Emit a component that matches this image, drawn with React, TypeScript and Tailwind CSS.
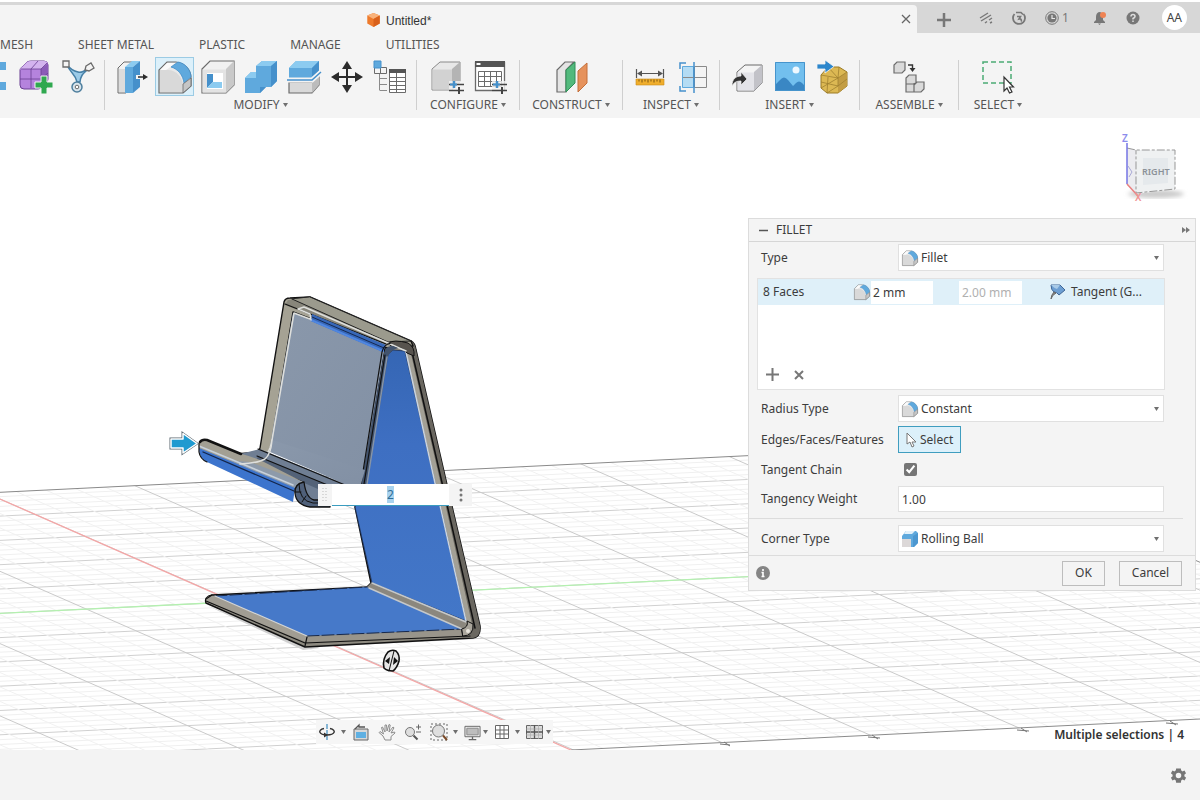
import type { ReactNode } from 'react';

const LINE = '#6b6b6b';
const BLUE = '#5fa9dd';
const BLUE_DARK = '#4590cb';
const BLUE_LIGHT = '#8ccbf0';

/* ---------- Toolbar icons (38 x 38 box) ---------- */

function Icon({ children }: { children: ReactNode }) {
  return (
    <svg viewBox="0 0 38 38" className="h-[38px] w-[38px]" fill="none" aria-hidden="true">
      {children}
    </svg>
  );
}

function EdgeIcon() {
  return (
    <Icon>
      <path d="M14 5h17v8H21v12h10v8H14z" fill={BLUE} />
    </Icon>
  );
}

function FormIcon() {
  return (
    <Icon>
      <path d="M3 13q0-2 2-3l5-5q2-1 4-1h13q4 0 4 4v14q0 2-2 4l-4 4q-2 2-4 2H7q-4 0-4-4z" fill="#b583dd" stroke="#6a3f93" />
      <path d="M3 13q0-2 2-3l5-5q2-1 4-1h13q3 0 4 2l-7 6H6q-3 0-3 1z" fill="#d3b3ee" />
      <path d="M24 12l7-6v16q0 2-2 4l-5 5z" fill="#8c5bb8" />
      <path d="M4 12h20l6-6M24 12v19M3 22h21l7-6M14 12v19M14 12l7-8" stroke="#6a3f93" strokeWidth=".8" />
      <path d="M24 19h6v6h6v6h-6v6h-6v-6h-6v-6h6z" fill="#2fa84f" stroke="#f4f4f4" />
    </Icon>
  );
}

function BranchIcon() {
  return (
    <Icon>
      <path d="M8 8c4 9 8 8 10 17h3c1-9 5-9 10-15-6 4-8 6-12 5-5-1-7-3-11-7z" fill="#9ccbe8" stroke="#467fa6" strokeWidth="1.5" />
      <path d="M4 4h6v6H4zM27 9l5-3 3 5-5 3-4-1z" fill="#f4f4f4" stroke={LINE} strokeWidth="1.3" />
      <circle cx="18" cy="30" r="5" fill="#d8e4ec" stroke="#4f7f9e" strokeWidth="1.5" />
      <circle cx="18" cy="30" r="1.8" fill="#fff" stroke={LINE} />
    </Icon>
  );
}

function PressPullIcon() {
  return (
    <Icon>
      <path d="M5 10l6-6h8l-6 6v25H5z" fill="#f2f2f2" stroke={LINE} />
      <path d="M6 11h6v23H6z" fill="#dcdcdc" />
      <path d="M12 9l7-6h8l-7 6z" fill={BLUE_LIGHT} />
      <path d="M12 9h8v26h-8z" fill={BLUE} />
      <path d="M20 9l7-6v26l-7 6z" fill={BLUE_DARK} />
      <path d="M23 19h8" stroke="#f4f4f4" strokeWidth="4" />
      <path d="M25 19h6" stroke="#2b2b2b" strokeWidth="1.5" />
      <path d="M30 16l5 3-5 3z" fill="#2b2b2b" />
    </Icon>
  );
}

function FilletShape() {
  return (
    <>
      <path d="M3 35V12l8-8h9c9 1 15 8 15 16v8l-8 7z" fill="#e9e9e9" stroke={LINE} strokeWidth="1.2" />
      <path d="M4 12h9c8 1 13 7 14 15v7H4z" fill="#d9d9d9" />
      <path d="M4 12l7-7h8l-6 5-3 2z" fill="#fafafa" />
      <path d="M15 9l7-5c7 1 13 8 13 15l-7 6C27 17 22 11 15 9z" fill={BLUE} stroke={BLUE_DARK} strokeWidth=".8" />
      <path d="M27 26l8-6v8l-8 7z" fill="#c6c6c6" stroke={LINE} strokeWidth=".8" />
    </>
  );
}

function FilletIcon() {
  return (
    <Icon>
      <FilletShape />
    </Icon>
  );
}

function ShellIcon() {
  return (
    <Icon>
      <path d="M3 35V11l8-8h24v24l-8 8z" fill="#f1f1f1" stroke={LINE} strokeWidth="1.2" />
      <path d="M27 11l8-8v24l-8 8z" fill="#c9c9c9" />
      <path d="M3.500 11.500H27V34.500H3.500z" fill="#e3e3e3" />
      <path d="M8 15h16v16H8z" fill="#fff" />
      <path d="M8 16h6v8l-6 6z" fill={BLUE_DARK} />
      <path d="M14 24h9v6H8z" fill={BLUE_LIGHT} />
    </Icon>
  );
}

function CombineIcon() {
  return (
    <Icon>
      <path d="M3 20l6-6h5V8l6-5h15v20l-6 6h-5l-6 6H3z" fill={BLUE} />
      <path d="M3 20l6-6h5v6zM14 8l6-5h15l-6 5z" fill={BLUE_LIGHT} />
      <path d="M29 8l6-5v20l-6 6zM18 29h6l-6 6z" fill={BLUE_DARK} />
    </Icon>
  );
}

function SplitIcon() {
  return (
    <Icon>
      <path d="M4 24h23l7-6v9l-7 8H4z" fill="#d9d9d9" stroke={LINE} strokeWidth="1.2" />
      <path d="M27 24l7-6v9l-7 8z" fill="#bcbcbc" />
      <path d="M4 10l7-7h23v10l-7 7H4z" fill={BLUE} />
      <path d="M4 10l7-7h23l-7 7z" fill={BLUE_LIGHT} />
      <path d="M27 10l7-7v10l-7 7z" fill={BLUE_DARK} />
      <path d="M2 22h25l9-8" stroke="#f4f4f4" strokeWidth="5" />
      <path d="M2 22h25l9-8" stroke={BLUE_DARK} strokeWidth="1.5" />
    </Icon>
  );
}

function MoveIcon() {
  return (
    <Icon>
      <path d="M19 7v24M7 19h24" stroke="#2b2b2b" strokeWidth="2" />
      <path d="M19 3l5 8H14zM19 35l5-8H14zM3 19l8-5v10zM35 19l-8-5v10z" fill="#2b2b2b" />
    </Icon>
  );
}

function ParametersIcon() {
  return (
    <Icon>
      <path d="M3.500 9.500h6v6h-6zM9.500 9.500h6v6h-6z" fill="#f4f4f4" stroke={LINE} />
      <path d="M3 3h7v7H3z" fill={BLUE} stroke={BLUE_DARK} />
      <path d="M8.500 16v16.500M9 20.500h7M9 26.500h7M9 32.500h7" stroke="#8a8a8a" />
      <path d="M18.500 12.500h16v22h-16z" fill="#fff" stroke={LINE} />
      <path d="M18 11h17v4H18z" fill="#555" />
      <path d="M18 19.500h17M18 23.500h17M18 27.500h17M18 31.500h17M25.500 15v20" stroke={LINE} />
    </Icon>
  );
}

function Sliders() {
  return (
    <>
      <path d="M21 23h15v13H21z" fill="#f4f4f4" opacity=".8" />
      <path d="M21 26.500h15M21 32.500h15" stroke="#444" strokeWidth="1.5" />
      <path d="M26 23v7" stroke={BLUE_DARK} strokeWidth="2.500" />
      <path d="M22 26.500h7" stroke={BLUE_DARK} strokeWidth="2" />
      <path d="M31 29v7" stroke="#444" strokeWidth="2" />
    </>
  );
}

function ConfigureIcon() {
  return (
    <Icon>
      <path d="M4 32V11l8-7h20v20l-8 8z" fill="#e8e8e8" stroke="#8a8a8a" />
      <path d="M4.500 11.500H24V31.500H4.500z" fill="#d2d2d2" />
      <path d="M24 11l8-7v20l-8 8z" fill="#b4b4b4" />
      <Sliders />
    </Icon>
  );
}

function ConfigureTableIcon() {
  return (
    <Icon>
      <path d="M4.500 4.500h29v28h-29z" fill="#fff" stroke={LINE} strokeWidth="1.3" />
      <path d="M4 3h30v6H4z" fill="#555" />
      <path d="M5.500 5h4v2h-4z" fill="#fff" />
      <path d="M7.500 13.500h23v15h-23zM7.500 18.500h23M7.500 23.500h23M13.500 13.500v15M19.500 13.500v15M25.500 13.500v15" stroke={LINE} />
      <Sliders />
    </Icon>
  );
}

function PlanesIcon() {
  return (
    <Icon>
      <path d="M5 34V12l8-8h9l-8 8v22z" fill="#e4e4e4" stroke={LINE} strokeWidth="1.2" />
      <path d="M14 12l9-8v21l-9 9z" fill="#52b97c" stroke="#2f8f57" />
      <path d="M26 13l9-8v20l-9 9z" fill="#e6925c" stroke="#c46f3a" />
    </Icon>
  );
}

function MeasureIcon() {
  return (
    <Icon>
      <path d="M5.500 11v9M32.500 11v9M7 15.500h24" stroke="#555" strokeWidth="1.2" />
      <path d="M6 15.500l5-3v6zM32 15.500l-5-3v6z" fill="#555" />
      <path d="M5 21h28v6H5z" fill="#f0ae2c" stroke="#c98a17" strokeWidth=".6" />
      <path d="M8 21.500v2M11 21.500v3M14 21.500v2M17 21.500v3M20 21.500v2M23 21.500v3M26 21.500v2M29 21.500v3" stroke="#7a5410" />
    </Icon>
  );
}

function SectionIcon() {
  return (
    <Icon>
      <path d="M8.500 8.500h11v21h-11z" fill="#b4dcf4" stroke={BLUE} />
      <path d="M20.500 8.500h12v21h-12zM9 19.500h23" stroke="#8a8a8a" />
      <path d="M20 4v31M12 5H6v6M6 28v5h6" stroke={BLUE_DARK} strokeWidth="1.5" />
    </Icon>
  );
}

function InsertIcon() {
  return (
    <Icon>
      <path d="M9 33V14l8-7h17v18l-8 8z" fill="#f4f4f4" stroke={LINE} />
      <path d="M9.500 14.500H26V32.500H9.500z" fill="#e3e3e8" />
      <path d="M26 14l8-7v18l-8 8z" fill="#c2c2c8" />
      <path d="M4 28c0-7 4-10 9-10v-4l6 7-6 6v-4c-4 0-7 1-9 5z" fill="#333" stroke="#f4f4f4" strokeWidth=".7" />
    </Icon>
  );
}

function ImageIcon() {
  return (
    <Icon>
      <path d="M4 4h30v29H4z" fill="#72bfee" />
      <circle cx="25" cy="12" r="3.500" fill="#eef8ff" />
      <path d="M4 27l5-5q4-5 8 0l5 6 3-3q3-3 6 0l3 3v5H4z" fill="#3a87c4" />
      <path d="M4.500 4.500h29v28h-29z" stroke="#4694cc" />
    </Icon>
  );
}

function InsertMeshIcon() {
  return (
    <Icon>
      <path d="M7 17l7-8h11l8 5v14l-9 7H13l-6-5z" fill="#dcb853" stroke="#9b7a25" />
      <path d="M24 20l9-6v14l-9 7z" fill="#c39d43" />
      <path d="M7 17l17 3M7 30l17-10 9-6M7 24l17 4 9-7M13 35l11-7V20M14 9l10 11 1-11M14 19l-1 16" stroke="#a08030" strokeWidth=".8" />
      <path d="M3 6h8V2l9 6.500L11 15v-4H3z" fill="#2c86cc" stroke="#f4f4f4" strokeWidth=".8" />
    </Icon>
  );
}

function AssembleIcon() {
  return (
    <Icon>
      <path d="M4 14V7l3-3h8v8l-3 3H4zM16 20l3-3h7v8l-3 1h-7zM16 26h8v8h-8zM24 27l3-3h7v7l-3 3h-7z" fill="#dadada" stroke={LINE} strokeWidth="1.2" />
      <path d="M18 7h4.500v4" stroke="#333" strokeWidth="1.4" />
      <path d="M19.500 10h6l-3 4z" fill="#333" />
    </Icon>
  );
}

function SelectIcon() {
  return (
    <Icon>
      <path d="M4 4h28v21H4z" stroke="#4bab74" strokeWidth="1.500" strokeDasharray="5 3" />
      <path d="M25 19v14l3-3 2.500 5 2.500-1-2.500-5h4z" fill="#fff" stroke="#333" strokeWidth="1.2" />
    </Icon>
  );
}

/* ---------- Small shared pieces ---------- */

function Caret() {
  return (
    <svg viewBox="0 0 5 4" className="h-1 w-[5px] shrink-0" aria-hidden="true">
      <path d="M0 0h5L2.500 4z" fill="#6f6f6f" />
    </svg>
  );
}

function SmallFillet() {
  return (
    <svg viewBox="0 0 38 38" className="h-[18px] w-[18px] shrink-0" fill="none" aria-hidden="true">
      <FilletShape />
    </svg>
  );
}

function RollingBallIcon() {
  return (
    <svg viewBox="0 0 18 18" className="h-[18px] w-[18px] shrink-0" aria-hidden="true">
      <path d="M1 6l4-5h10l2 2v10l-4 4H1z" fill={BLUE} />
      <path d="M5 1h9l-3 3H3z" fill="#e3f1fa" />
      <path d="M1 9h9v8H1z" fill="#dcd8d8" />
      <path d="M12 6l5-3v10l-4 4h-1z" fill={BLUE_DARK} opacity=".7" />
    </svg>
  );
}

type Tool = { name: string; icon: () => ReactNode; active?: boolean };

const groups: { label: string; width: string; tools: Tool[] }[] = [
  {
    label: 'MODIFY',
    width: 'w-[312px]',
    tools: [
      { name: 'Press Pull', icon: PressPullIcon },
      { name: 'Fillet', icon: FilletIcon, active: true },
      { name: 'Shell', icon: ShellIcon },
      { name: 'Combine', icon: CombineIcon },
      { name: 'Split Body', icon: SplitIcon },
      { name: 'Move', icon: MoveIcon },
      { name: 'Parameters', icon: ParametersIcon },
    ],
  },
  {
    label: 'CONFIGURE',
    width: 'w-[103px]',
    tools: [
      { name: 'Configure', icon: ConfigureIcon },
      { name: 'Configuration Table', icon: ConfigureTableIcon },
    ],
  },
  { label: 'CONSTRUCT', width: 'w-[103px]', tools: [{ name: 'Offset Plane', icon: PlanesIcon }] },
  {
    label: 'INSPECT',
    width: 'w-[97px]',
    tools: [
      { name: 'Measure', icon: MeasureIcon },
      { name: 'Section Analysis', icon: SectionIcon },
    ],
  },
  {
    label: 'INSERT',
    width: 'w-[140px]',
    tools: [
      { name: 'Insert Derive', icon: InsertIcon },
      { name: 'Canvas', icon: ImageIcon },
      { name: 'Insert Mesh', icon: InsertMeshIcon },
    ],
  },
  { label: 'ASSEMBLE', width: 'w-[99px]', tools: [{ name: 'New Component', icon: AssembleIcon }] },
  { label: 'SELECT', width: 'w-[78px]', tools: [{ name: 'Select', icon: SelectIcon }] },
];

function TitleBar() {
  return (
    <div className="flex h-[33px] border-t-2 border-white bg-[#d7d7d7]">
      <div className="mt-[3px] flex min-w-0 flex-1 items-center rounded-tr bg-[#f4f4f4] pr-[2px] pl-[366px]">
        <svg viewBox="0 0 16 18" className="mt-[2px] mr-[5px] h-4 w-[15px]" aria-hidden="true">
          <path d="M8 1l7 3v9l-7 4-7-4V4z" fill="#ee7a2b" />
          <path d="M8 1l7 3-7 4-7-4z" fill="#f9b27a" />
          <path d="M8 8l7-4v9l-7 4z" fill="#d9601a" />
        </svg>
        <span className="pt-[3px] font-['Liberation_Sans'] text-xs text-[#333]">Untitled*</span>
        <button aria-label="Close tab" className="ml-auto p-[3px] text-[#666]">
          <svg viewBox="0 0 12 12" className="h-3 w-3">
            <path d="M2 2l8 8M10 2l-8 8" stroke="currentColor" strokeWidth="1.3" />
          </svg>
        </button>
      </div>
      <div className="flex w-[283px] shrink-0 items-center pl-[20px] text-[#777]">
        <button aria-label="New tab" className="mt-1">
          <svg viewBox="0 0 14 14" className="h-[14px] w-[14px]">
            <path d="M7 0v14M0 7h14" stroke="currentColor" strokeWidth="2.500" />
          </svg>
        </button>
        <button aria-label="Extensions" className="ml-[28px]">
          <svg viewBox="0 0 14 12" className="h-3 w-[14px]">
            <path d="M1 6l8-5M2 9l10-6M6 11l2-1.500M10 8l3-2M11 11l2-1" stroke="currentColor" strokeWidth="1.4" />
          </svg>
        </button>
        <button aria-label="Updates" className="ml-[19px]">
          <svg viewBox="0 0 14 14" className="h-[14px] w-[14px]" fill="none">
            <path d="M2.500 3a6 6 0 1 0 9 0" stroke="currentColor" strokeWidth="1.800" />
            <path d="M4 1.500h5l2 2M5 5.500h3.500L7 8c2-.5 3 1 2 2.500" stroke="currentColor" strokeWidth="1.600" />
          </svg>
        </button>
        <button className="ml-[19px] flex items-center gap-[3px] text-xs">
          <svg viewBox="0 0 14 14" className="h-[14px] w-[14px]" fill="none">
            <circle cx="7" cy="7" r="6.300" stroke="currentColor" />
            <circle cx="7" cy="7" r="4.600" fill="currentColor" />
            <path d="M7 4v3.500h3" stroke="#e8e8e8" strokeWidth="1.2" />
          </svg>
          1
        </button>
        <button aria-label="Notifications" className="ml-[24px]">
          <svg viewBox="0 0 14 14" className="h-[14px] w-[14px]">
            <path d="M6 1q4 0 4 5v3l2 2v1H1v-1l2-2V6q0-4 3-5zM5 12.500h3l-1.500 1.500z" fill="currentColor" />
            <circle cx="10" cy="4" r="3" fill="#ef8354" />
          </svg>
        </button>
        <button aria-label="Help" className="ml-[19px]">
          <svg viewBox="0 0 14 14" className="h-[14px] w-[14px]">
            <circle cx="7" cy="7" r="6.500" fill="currentColor" />
            <path d="M5 5.500q0-2 2-2t2 2q0 1-2 2v1M7 9.500v1.500" stroke="#ddd" strokeWidth="1.5" fill="none" />
          </svg>
        </button>
        <button className="ml-[22px] h-[25px] w-[25px] rounded-full bg-white text-xs text-[#444]">AA</button>
      </div>
    </div>
  );
}

function Toolbar() {
  return (
    <header className="overflow-hidden bg-[#f4f4f4] text-[#555]">
      <TitleBar />
      <nav className="flex h-[23px] items-center gap-[45px] text-xs">
        <a href="#mesh">MESH</a>
        <a href="#sheet-metal">SHEET METAL</a>
        <a href="#plastic">PLASTIC</a>
        <a href="#manage">MANAGE</a>
        <a href="#utilities">UTILITIES</a>
      </nav>
      <div className="flex h-[62px] items-start">
        <div className="mt-1 flex h-[50px] w-[105px] shrink-0 justify-end gap-1 border-r border-[#cfcfcf] pr-[7px]">
          <button aria-label="Edge" className="-mt-[3px] h-[38px] shrink-0"><EdgeIcon /></button>
          <button aria-label="Create Form" className="-mt-[3px] h-[38px] shrink-0"><FormIcon /></button>
          <button aria-label="Branch" className="-mt-[3px] h-[38px] shrink-0"><BranchIcon /></button>
        </div>
        {groups.map((group) => (
          <div
            key={group.label}
            className={`mt-1 h-[50px] shrink-0 border-r border-[#cfcfcf] last:border-r-0 ${group.width}`}
          >
            <div className="-mt-[3px] flex justify-center gap-1">
              {group.tools.map((tool) => (
                <button
                  key={tool.name}
                  aria-label={tool.name}
                  className={
                    tool.active
                      ? 'flex h-[39px] w-[39px] items-center justify-center bg-[#dcf0fa] outline -outline-offset-1 outline-[#9bcbe4]'
                      : 'flex h-[39px] w-[39px] items-center justify-center'
                  }
                >
                  <tool.icon />
                </button>
              ))}
            </div>
            <button className="flex h-[18px] w-full items-center justify-center gap-[3px] text-xs">
              {group.label}
              <Caret />
            </button>
          </div>
        ))}
      </div>
    </header>
  );
}

/* ---------- Scene ---------- */

// rows run almost level, columns fall to the right; every fifth line is a major one
const rows = Array.from({ length: 62 }, (_, i) => i - 26);
const columns = Array.from({ length: 60 }, (_, i) => i - 38);

function GroundGrid() {
  return (
    <g>
      <clipPath id="ground">
        <path d="M0 492.300L935 446.500 1200 562.300V719L571 750H0z" />
      </clipPath>
      <g clipPath="url(#ground)">
        {rows.map((i) => {
          const y = 613.3 + i * 4.86;
          return <path key={i} d={`M0 ${y}L1200 ${y - 58.8}`} stroke={i % 5 === 0 ? '#d0d0d0' : '#f0f0f0'} />;
        })}
        {columns.map((i) => {
          const y = 499 + i * 14.46;
          return <path key={i} d={`M0 ${y}L1200 ${y + 525}`} stroke={i % 5 === 0 ? '#cacaca' : '#f1f1f1'} />;
        })}
        <path d="M0 613.300L1200 554.500" stroke="#b4f0b0" strokeWidth="1.3" />
        <path d="M0 499L571 750" stroke="#f4a6a6" strokeWidth="1.3" />
      </g>
      <path d="M0 492.300L935 446.500 1200 562.300M571 750L1200 719" stroke="#8b8b8b" fill="none" />
      <path d="M720 744l10 1M724 742l6 4M868 737l12 1M872 735l6 4M1017 730l12 1M1021 728l6 4M1166 723l12 1M1170 721l6 4" stroke="#777" />
    </g>
  );
}

function PhoneStand() {
  return (
    <g strokeLinejoin="round" strokeLinecap="round">
      <defs>
        <linearGradient id="web" x1="0" y1="0" x2="0" y2="1">
          <stop offset="0" stopColor="#3566b4" />
          <stop offset=".35" stopColor="#3e6fc2" />
          <stop offset="1" stopColor="#4377c8" />
        </linearGradient>
        <linearGradient id="plate" x1="0" y1="0" x2="1" y2="1">
          <stop offset="0" stopColor="#8a98ab" />
          <stop offset="1" stopColor="#8290a4" />
        </linearGradient>
      </defs>

      {/* contact shadow */}
      <path d="M208 606L303 650L320 648z" fill="#cfcfcf" />

      {/* right spine, from the top bend down to the foot */}
      <path d="M386 342L411 341Q415 343 416 350L447 485L480 626Q481 637 473 638L305 647L206 603Q204 597 212 595L367 587L371 583L355 507L362 484z" fill="#8d8a80" stroke="#111" strokeWidth="1.5" />
      <path d="M411 341Q415 343 416 350L447 485L480 626Q481 637 473 638L462 638Q473 634 471 624L437 485L408 352z" fill="#6a6760" />
      <path d="M412 352L443 487L475 628" stroke="#111" fill="none" strokeWidth="1.500" />
      <path d="M406 352L438 492L467 622L472 624L441 485L411 354z" fill="#a3a095" />

      {/* blue web */}
      <path d="M387 355L393 350L405 351L435 483L466 621L372 583L355 507L366 484z" fill="url(#web)" stroke="#1b2f57" strokeWidth=".8" />
      <path d="M406 352L435 483L466 621" stroke="#c9d3df" strokeWidth="1.500" fill="none" />

      {/* foot */}
      <path d="M215 596L367 587L462 629L307 636z" fill="#4679c9" />
      <path d="M215 596L367 587M307 636L462 629" stroke="#17294d" strokeDasharray="12 3" />
      <path d="M371 583L466 621L462 629L367 587z" fill="#8b877e" />
      <path d="M372 583L466 622M369 588L462 629" stroke="#c5c8ca" strokeWidth="1.4" />
      <path d="M206 599Q208 595 214 596L307 636L306 642L206 602z" fill="#a19d93" />
      <path d="M215 596L307 636" stroke="#d3d5d6" strokeWidth="1.2" fill="none" />
      <path d="M307 637L462 630L470 636L306 642z" fill="#99958b" />
      <path d="M206 601L305 643L470 636M307 637L305 646M462 630L463 636M212 595L206 599" stroke="#111" fill="none" strokeWidth="1.2" />
      <path d="M462 629Q469 627 467 621L473 624Q474 636 463 636z" fill="#aaa69c" stroke="#111" />
      <circle cx="468" cy="631" r="2" fill="#e9e6dd" />

      {/* upright frame */}
      <path d="M284 302Q285 298 290 298L310 297L411 341L413 346L387 348L293 312L272 440Q270 459 255 462L241 463L236 454L258 452L260 448z" fill="#a5a294" stroke="#111" strokeWidth="1.4" />
      <path d="M288 300L299 299L388 339L386 344L285 305z" fill="#88867b" />
      <path d="M310 297L411 341L388 342L292 299z" fill="#9b9a8d" stroke="#222" />
      <path d="M285 304L386 344" stroke="#111" strokeWidth="1.2" />
      <path d="M388 343Q394 339 408 343Q415 347 414 356L407 353Q402 346 393 347z" fill="#57534e" stroke="#111" />
      <path d="M293 313L310 319L384 350L362 484L343 484L270 446z" fill="url(#plate)" />
      <path d="M312 314L386 345L383 352L311 321z" fill="#3767b8" />
      <path d="M312 317L384 348" stroke="#16294f" />
      <path d="M311 320L383 351" stroke="#4f86e0" strokeWidth="2" />
      <path d="M298 309L304 307L388 343L406 351M298 309L310 314L311 320M310 319L294 313L272 440Q269 459 255 462L240 463" stroke="#dedfdc" strokeWidth="1.500" fill="none" />
      <path d="M384 353Q386 345 393 346L398 348Q390 350 388 357L367 484H361z" fill="#42536d" />
      <path d="M382 352Q384 344 391 343M382 352L361 484M385 355L364 484" stroke="#111" fill="none" strokeWidth="1.2" />
      <path d="M387 357L367 484" stroke="#8694a7" strokeWidth="1.500" />

      {/* cradle */}
      <path d="M240 454L260 449L345 484H330V507H312Q306 503 304 490L297 484L232 458z" fill="#6f7e93" />
      <path d="M258 456L330 486L318 489L256 462z" fill="#536278" />
      <path d="M270 452L345 484H361L365 470L272 440z" fill="url(#plate)" />
      <path d="M258 449L345 485M257 456L330 486M252 462L303 482" stroke="#111" strokeWidth="1.2" />
      <path d="M199 443Q201 438 207 440L242 454Q256 458 264 462L303 482L295 489L199 449z" fill="#a29f93" />
      <path d="M250 462L303 482L295 489L225 460z" fill="#8d9aaa" />
      <path d="M199 448L295 488L293 502L207 462Q199 459 199 448z" fill="#3c74cd" />
      <path d="M199 446L293 485" stroke="#c8d1da" strokeWidth="1.600" />
      <path d="M203 452L294 491" stroke="#14264a" strokeWidth="1.300" />
      <path d="M200 442Q202 439 207 440L241 454" stroke="#111" strokeWidth="2.500" fill="none" />
      <path d="M199 443V452Q200 459 207 462" stroke="#111" strokeWidth="1.2" fill="none" />
      <path d="M304 482Q294 484 295 493Q296 505 310 507H330V500H314Q306 498 304 482z" fill="#4f607a" stroke="#111" strokeWidth="1.3" />
      <path d="M299 484Q299 501 313 503H330M295 492H301M302 502L306 496" stroke="#111" fill="none" />
      <path d="M240 464Q258 463 265 459Q271 454 272 440" stroke="#dedfdc" strokeWidth="1.500" fill="none" />

      {/* drag arrow */}
      <path d="M169.500 437.500H181.500V431L199 443.500 181.500 455.500V449.500H169.500z" fill="#5c6870" />
      <path d="M171 439H183V433.500L197 443.500 183 453V448H171z" fill="#1f9ad0" stroke="#fff" strokeWidth="1.5" />

      {/* rotate handle */}
      <path d="M388 652Q392 649 396 651Q400 655 399 661Q397 668 393 671Q387 671 384 668Q382 659 388 652z" fill="#e6e6e6" stroke="#111" strokeWidth="1.600" />
      <path d="M394 651L389 671" stroke="#111" />
      <path d="M385 661L390 657L389 664zM398 661L394 657L393 665z" fill="#111" />
    </g>
  );
}

function ViewCube() {
  return (
    <svg viewBox="0 0 72 76" className="absolute top-[10px] right-[12px] h-[76px] w-[72px]" aria-label="View cube">
      <defs>
        <filter id="soft"><feGaussianBlur stdDeviation="2" /></filter>
      </defs>
      <ellipse cx="40" cy="66" rx="28" ry="4" fill="#cacaca" filter="url(#soft)" />
      <path d="M11 20L20 22V66L11 57z" fill="#ececf0" />
      <path d="M20 22L59 22V61L20 66z" fill="#eff1f2" />
      <path d="M27 30L52 30V55L27 57z" fill="#e5e9ec" />
      <path d="M11 20L20 22 59 22V61L20 65V22" fill="none" stroke="#979797" strokeDasharray="8 2 3 2" />
      <path d="M11 15V56" stroke="#7474e4" strokeWidth="1.5" />
      <path d="M11 56L22 68" stroke="#e98080" strokeWidth="1.5" />
      <path d="M12 38l4 6-3 5" stroke="#a9a9d6" fill="none" />
      <text x="6" y="14" fontSize="10" fontWeight="600" fill="#8c8cec">Z</text>
      <text x="19" y="73" fontSize="10" fontWeight="600" fill="#f09494">X</text>
      <text x="26" y="47" fontSize="9" fontWeight="600" fill="#8b9198">RIGHT</text>
    </svg>
  );
}

function ValueBox() {
  return (
    <div className="absolute top-[366px] left-[318px] flex h-[22px] w-[154px] bg-[#f4f4f4]">
      <svg viewBox="0 0 14 22" className="h-[22px] w-[14px]" aria-hidden="true">
        <path d="M5 4v14M8 4v14" stroke="#bbb" strokeDasharray="1 2" />
      </svg>
      <input
        aria-label="Fillet radius"
        defaultValue="2"
        autoFocus
        onFocus={(e) => e.currentTarget.select()}
        className="h-[22px] w-[117px] border-b border-[#3a9cbf] bg-white text-center text-xs text-[#2f6d98] outline-none selection:bg-[#a9d3ee] selection:text-[#2f6d98]"
      />
      <button aria-label="More" className="flex flex-1 items-center justify-center">
        <svg viewBox="0 0 4 14" className="h-[14px] w-1">
          <circle cx="2" cy="2" r="1.500" fill="#777" />
          <circle cx="2" cy="7" r="1.500" fill="#777" />
          <circle cx="2" cy="12" r="1.500" fill="#777" />
        </svg>
      </button>
    </div>
  );
}

function ViewControls() {
  return (
    <div className="absolute bottom-[6px] left-[316px] flex h-6 items-center bg-[#f6f6f6] pr-[2px] pl-[2px]">
      <button aria-label="Orbit" className="flex items-center gap-[5px]">
        <svg viewBox="0 0 18 18" className="h-[18px] w-[18px]" fill="none">
          <path d="M9 1v16" stroke="#4c94c4" strokeWidth="1.3" strokeDasharray="5 1" />
          <path d="M6 5.500C-1 7 1 12 9 12s10-5 3-6.500" stroke="#333" strokeWidth="1.4" />
          <path d="M6 9.500v5l4-2.500z" fill="#333" />
        </svg>
        <Caret />
      </button>
      <button aria-label="Look At" className="ml-[6px]">
        <svg viewBox="0 0 18 18" className="h-[18px] w-[18px]" fill="none">
          <path d="M2 6h14v11H2z" fill="#d8d8d8" stroke="#666" />
          <path d="M4 9h10v6H4z" fill="#5fb0e2" />
          <path d="M3 6l4-4v2h6" stroke="#555" strokeWidth="1.3" />
        </svg>
      </button>
      <button aria-label="Pan" className="ml-2">
        <svg viewBox="0 0 18 18" className="h-[18px] w-[18px]" fill="none">
          <path d="M7 17L5 13 1 9.500l1-1L5.500 11 3.500 4.500l1-.5L7 9V2h1.500l.5 6 2-6.500 1.200.5L11 9l4-5 1 .8L13 10l3.500-1 .5 1-4 3.500V17z" fill="#f4f4f4" stroke="#8c8c8c" />
        </svg>
      </button>
      <button aria-label="Zoom" className="ml-2">
        <svg viewBox="0 0 18 18" className="h-[18px] w-[18px]" fill="none">
          <circle cx="6" cy="9" r="4.500" fill="#dedede" stroke="#777" />
          <path d="M9.500 12.500l4 4" stroke="#555" strokeWidth="2" />
          <path d="M12 4h5M14.500 1.500v5M12 9h5" stroke="#666" />
        </svg>
      </button>
      <button aria-label="Fit" className="ml-2 flex items-center gap-[5px]">
        <svg viewBox="0 0 18 18" className="h-[18px] w-[18px]" fill="none">
          <path d="M1 1h16v16H1z" stroke="#666" strokeDasharray="2 2" />
          <circle cx="8.500" cy="8" r="6" fill="#dedede" stroke="#777" />
          <path d="M13 12.500l4 4.500" stroke="#7a4a28" strokeWidth="2" />
        </svg>
        <Caret />
      </button>
      <button aria-label="Display Settings" className="ml-[6px] flex items-center gap-[2px]">
        <svg viewBox="0 0 18 18" className="h-[18px] w-[17px]" fill="none">
          <path d="M1 3h16v11H1z" fill="#eee" stroke="#666" />
          <path d="M3 5h12v7H3z" fill="#bdbdbd" stroke="#888" />
          <path d="M9 14v3M5 17h8" stroke="#666" strokeWidth="1.4" />
        </svg>
        <Caret />
      </button>
      <button aria-label="Grid and Snaps" className="ml-[6px] flex items-center gap-[5px]">
        <svg viewBox="0 0 16 16" className="h-4 w-4" fill="none">
          <path d="M1.500 1.500h13v13h-13zM1.500 6h13M1.500 10h13M6 1.500v13M10 1.500v13" fill="#fff" stroke="#666" />
        </svg>
        <Caret />
      </button>
      <button aria-label="Viewports" className="ml-[6px] flex items-center gap-[3px]">
        <svg viewBox="0 0 17 16" className="h-4 w-[17px]" fill="none">
          <path d="M.5 1.500h16v13H.5z" fill="#dcdcdc" stroke="#666" />
          <path d="M0 8h17M8.500 1v14" stroke="#555" strokeWidth="1.3" />
          <path d="M0 5h17M0 11h17M4.500 1v14M12.500 1v14" stroke="#aaa" strokeWidth=".7" />
        </svg>
        <Caret />
      </button>
    </div>
  );
}

/* ---------- Fillet dialog ---------- */

function Row({ label, id, children }: { label: string; id: string; children: ReactNode }) {
  return (
    <div className="flex items-center">
      <label htmlFor={id} className="w-[137px] shrink-0">
        {label}
      </label>
      {children}
    </div>
  );
}

function Dropdown({ id, icon, value }: { id: string; icon: ReactNode; value: string }) {
  return (
    <div className="flex h-[27px] w-[266px] items-center gap-[2px] border border-[#e0e0e0] bg-white pr-1 pl-[2px]">
      {icon}
      <select id={id} defaultValue={value} className="min-w-0 flex-1 appearance-none bg-transparent outline-none">
        <option>{value}</option>
      </select>
      <Caret />
    </div>
  );
}

function FilletPanel() {
  return (
    <section className="absolute top-[100px] right-1 w-[448px] border border-[#dcdcdc] bg-[#f4f4f4] text-xs text-[#3c3c3c]">
      <div className="flex h-[23px] items-center border-b border-[#d6d6d6] pr-[5px] pl-[10px]">
        <button aria-label="Collapse" className="mr-2">
          <svg viewBox="0 0 9 9" className="h-[9px] w-[9px]">
            <path d="M0 4.500h9" stroke="#555" strokeWidth="1.5" />
          </svg>
        </button>
        <h2 className="text-xs">FILLET</h2>
        <button aria-label="Dock" className="ml-auto">
          <svg viewBox="0 0 8 6" className="h-[6px] w-2">
            <path d="M0 0l4 3-4 3zM4 0l4 3-4 3z" fill="#777" />
          </svg>
        </button>
      </div>

      <div className="pt-[2px] pl-3">
        <Row label="Type" id="type">
          <Dropdown id="type" icon={<SmallFillet />} value="Fillet" />
        </Row>
      </div>

      <div className="mt-[7px] ml-2 flex h-[112px] w-[408px] flex-col border border-[#e2e2e2] bg-white">
        <div className="flex h-[26px] items-center bg-[#dff0f9] pl-[5px]">
          <span className="w-[90px]">8 Faces</span>
          <SmallFillet />
          <input aria-label="Radius" defaultValue="2 mm" className="h-[23px] w-[62px] bg-white pl-[2px] outline-none" />
          <input
            aria-label="Second radius"
            disabled
            defaultValue="2.00 mm"
            className="ml-[26px] h-[23px] w-[63px] bg-white pl-[3px] text-[#b0b0b0] outline-none"
          />
          <button className="ml-[27px] flex items-center gap-1">
            <svg viewBox="0 0 18 18" className="h-[18px] w-[18px]" aria-hidden="true">
              <path d="M2 2l9 0 5 5-6 5q-2-3-5-3-3-2-3-7z" fill="#6d9fd3" stroke="#3f6696" />
              <path d="M5 9q-3 3-3 7 1-4 5-6z" fill="#888" stroke="#666" />
              <path d="M2 2l9 0-3 4q-3-1-6-4z" fill="#a9cbe8" />
            </svg>
            Tangent (G...
          </button>
        </div>
        <div className="mt-auto flex items-center gap-[15px] px-[8px] pb-[8px] text-[#777]">
          <button aria-label="Add selection set">
            <svg viewBox="0 0 13 13" className="h-[13px] w-[13px]">
              <path d="M6.500 0v13M0 6.500h13" stroke="currentColor" strokeWidth="2" />
            </svg>
          </button>
          <button aria-label="Remove selection set">
            <svg viewBox="0 0 10 10" className="h-[10px] w-[10px]">
              <path d="M1 1l8 8M9 1L1 9" stroke="currentColor" strokeWidth="2" />
            </svg>
          </button>
        </div>
      </div>

      <div className="flex flex-col pt-[5px] pl-3">
        <Row label="Radius Type" id="radius-type">
          <Dropdown id="radius-type" icon={<SmallFillet />} value="Constant" />
        </Row>
        <div className="mt-1">
          <Row label="Edges/Faces/Features" id="edges">
            <button id="edges" className="flex h-[27px] w-[63px] items-center gap-[3px] border border-[#3f9dbf] bg-[#dcf0fa] pl-1.5">
              <svg viewBox="0 0 12 16" className="h-4 w-3" aria-hidden="true">
                <path d="M2 1v11l3-2 2 5 2-1-2-4h4z" fill="#fff" stroke="#777" />
              </svg>
              Select
            </button>
          </Row>
        </div>
        <div className="flex h-[33px] items-center">
          <Row label="Tangent Chain" id="tangent-chain">
            <input id="tangent-chain" type="checkbox" defaultChecked className="ml-[6px] h-[13px] w-[13px] accent-[#757575]" />
          </Row>
        </div>
        <Row label="Tangency Weight" id="weight">
          <input
            id="weight"
            defaultValue="1.00"
            className="h-[26px] w-[266px] border border-[#e0e0e0] bg-white pl-[3px] outline-none"
          />
        </Row>
      </div>

      <div className="mt-[6px] mr-3 border-t border-[#dcdcdc] pt-[6px] pb-[3px] pl-3">
        <Row label="Corner Type" id="corner">
          <Dropdown id="corner" icon={<RollingBallIcon />} value="Rolling Ball" />
        </Row>
      </div>

      <div className="flex h-[35px] items-center border-t border-[#dcdcdc] pr-[13px] pl-[7px]">
        <button aria-label="Info">
          <svg viewBox="0 0 14 14" className="h-[14px] w-[14px]">
            <circle cx="7" cy="7" r="7" fill="#858585" />
            <path d="M7 3v2M5.500 6.500H7v4M5.500 10.500h3" stroke="#fff" strokeWidth="1.600" fill="none" />
          </svg>
        </button>
        <button className="ml-auto h-[25px] w-[43px] border border-[#bdbdbd]">OK</button>
        <button className="ml-[14px] h-[25px] w-[63px] border border-[#bdbdbd]">Cancel</button>
      </div>
    </section>
  );
}

export default function App() {
  return (
    <div className="flex min-h-screen flex-col overflow-hidden bg-white font-['Noto_Sans','Open_Sans',sans-serif]">
      <Toolbar />
      <main className="relative flex min-h-[600px] flex-1 overflow-hidden">
        <svg
          viewBox="0 118 1200 632"
          preserveAspectRatio="xMinYMin slice"
          className="absolute inset-0 h-full w-full"
          fill="none"
          aria-label="Phone stand model"
        >
          <GroundGrid />
          <PhoneStand />
        </svg>
        <ValueBox />
        <ViewCube />
        <FilletPanel />
        <ViewControls />
        <p className="absolute right-4 bottom-[7px] text-xs font-semibold text-[#333]">Multiple selections | 4</p>
      </main>
      <footer className="flex h-[50px] items-center justify-end bg-[#f3f3f3] pr-[12px]">
        <button aria-label="Preferences" className="text-[#757575]">
          <svg viewBox="0 0 24 24" className="h-[19px] w-[19px]" fill="currentColor">
            <path d="M19.400 13a7.500 7.500 0 0 0 0-2l2.100-1.700-2-3.500-2.500 1a7.500 7.500 0 0 0-1.700-1L15 3H9l-.4 2.800a7.500 7.500 0 0 0-1.700 1l-2.500-1-2 3.500L4.600 11a7.500 7.500 0 0 0 0 2l-2.200 1.700 2 3.500 2.500-1a7.500 7.500 0 0 0 1.700 1L9 21h6l.4-2.800a7.500 7.500 0 0 0 1.700-1l2.500 1 2-3.500zM12 15.500a3.500 3.500 0 1 1 0-7 3.500 3.500 0 0 1 0 7z" />
          </svg>
        </button>
      </footer>
    </div>
  );
}
